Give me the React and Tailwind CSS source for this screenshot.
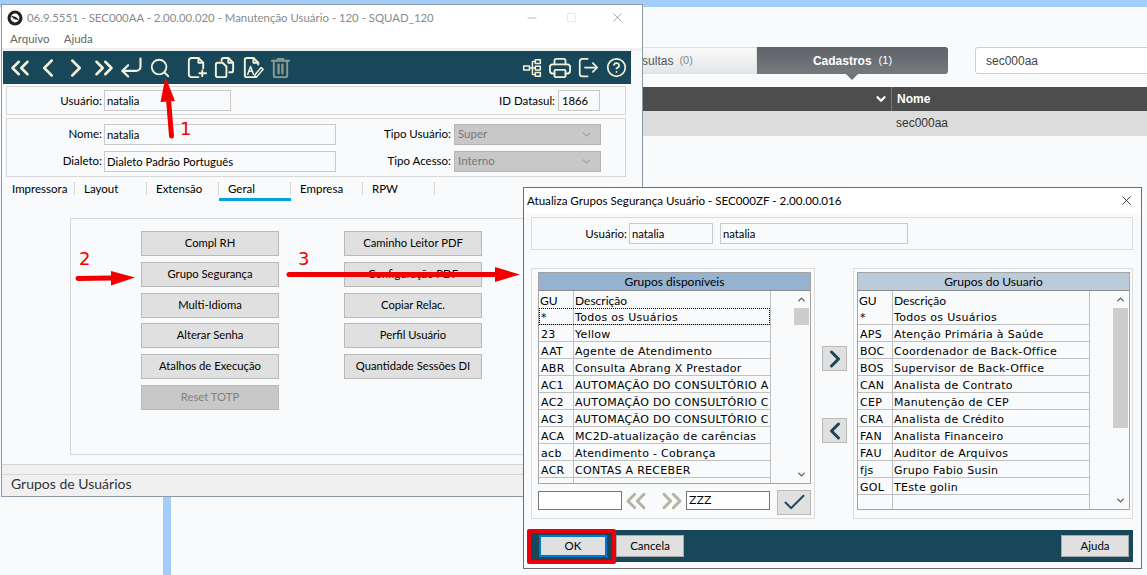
import { Check, ChevronLeft, ChevronRight, ChevronUp, ChevronDown, ChevronsLeft, ChevronsRight, CornerDownLeft, Search, CircleHelp, X, Minus, Square } from "lucide-react";

const leftGroups = [
  ["*", "Todos os Usuários"],
  ["23", "Yellow"],
  ["AAT", "Agente de Atendimento"],
  ["ABR", "Consulta Abrang X Prestador"],
  ["AC1", "AUTOMAÇÃO DO CONSULTÓRIO A"],
  ["AC2", "AUTOMAÇÃO DO CONSULTÓRIO C"],
  ["AC3", "AUTOMAÇÃO DO CONSULTÓRIO C"],
  ["ACA", "MC2D-atualização de carências"],
  ["acb", "Atendimento - Cobrança"],
  ["ACR", "CONTAS A RECEBER"],
  ["", ""],
];

const rightGroups = [
  ["*", "Todos os Usuários"],
  ["APS", "Atenção Primária à Saúde"],
  ["BOC", "Coordenador de Back-Office"],
  ["BOS", "Supervisor de Back-Office"],
  ["CAN", "Analista de Contrato"],
  ["CEP", "Manutenção de CEP"],
  ["CRA", "Analista de Crédito"],
  ["FAN", "Analista Financeiro"],
  ["FAU", "Auditor de Arquivos"],
  ["fjs", "Grupo Fabio Susin"],
  ["GOL", "TEste golin"],
  ["", ""],
];

const ui = "font-['Lato',sans-serif]";
const list = "font-['DejaVu_Sans',sans-serif]";

// toolbar drawings that lucide has no close match for
function Glyph({ children, className = "h-[23px] w-[23px]" }) {
  return (
    <svg viewBox="0 0 24 24" fill="none" stroke="currentColor" strokeWidth="2" strokeLinecap="round" strokeLinejoin="round" className={className}>
      {children}
    </svg>
  );
}

const NewFile = () => (
  <Glyph>
    <path d="M14 22H7a3 3 0 0 1-3-3V5a3 3 0 0 1 3-3h7l5 5v6" />
    <path d="M14 2v5h5" />
    <path d="M18 15v6M15 18h7" />
  </Glyph>
);

const CopyFile = () => (
  <Glyph>
    <path d="M9 5V4a2 2 0 0 1 2-2h5l5 5v8a2 2 0 0 1-2 2h-2" />
    <path d="M16 2v5h5" />
    <path d="M5 7h5l4 4v9a2 2 0 0 1-2 2H5a2 2 0 0 1-2-2V9a2 2 0 0 1 2-2z" />
  </Glyph>
);

const EditFile = () => (
  <Glyph>
    <path d="M18 9V7l-5-5H6a2 2 0 0 0-2 2v16a2 2 0 0 0 2 2h10" />
    <path d="M13 2v5h5" />
    <path d="M7 19l3-8 3 8M8 16h4" strokeWidth="1.6" />
    <path d="M15 19l6-7 2 2-6 7-3 1z" strokeWidth="1.6" />
  </Glyph>
);

const TrashBin = () => (
  <Glyph>
    <path d="M3 5h18" />
    <path d="M9 5V3h6v2" />
    <path d="M5 5v15a2 2 0 0 0 2 2h10a2 2 0 0 0 2-2V5" />
    <path d="M10 9v9M14 9v9" strokeWidth="2.4" />
  </Glyph>
);

const TreeBoxes = () => (
  <Glyph className="h-[20px] w-[20px]">
    <rect x="2" y="9.5" width="7" height="5" strokeWidth="1.8" />
    <rect x="16" y="2" width="6" height="4.5" strokeWidth="1.8" />
    <rect x="16" y="9.75" width="6" height="4.5" strokeWidth="1.8" />
    <rect x="16" y="17.5" width="6" height="4.5" strokeWidth="1.8" />
    <path d="M9 12h7M12.5 4.25v15.5M12.5 4.25H16M12.5 19.75H16" strokeWidth="1.8" />
  </Glyph>
);

const PrinterBox = () => (
  <Glyph className="h-[22px] w-[22px]">
    <path d="M6 8V4a2 2 0 0 1 2-2h8a2 2 0 0 1 2 2v4" />
    <path d="M6 18H4a3 3 0 0 1-3-3v-4a3 3 0 0 1 3-3h16a3 3 0 0 1 3 3v4a3 3 0 0 1-3 3h-2" />
    <rect x="6" y="14" width="12" height="8" rx="1" />
  </Glyph>
);

const ExitBox = () => (
  <Glyph className="h-[21px] w-[21px]">
    <path d="M11 2H5a3 3 0 0 0-3 3v14a3 3 0 0 0 3 3h6" />
    <path d="M8 12h14M17 7l5 5-5 5" />
  </Glyph>
);

function Field({ value, className = "" }) {
  return (
    <div className={`h-[21px] border border-[#c9c9c9] bg-[#f9fafc] pl-[2px] text-[11.25px] leading-[20px] text-black ${className}`}>
      {value}
    </div>
  );
}

function SelectBox({ value }) {
  return (
    <div className="flex h-[21px] w-[147px] items-center justify-between border border-[#b4b4b4] bg-[#c8c8c8] pl-[3px] pr-[7px] text-[11.5px] text-[#777]">
      {value}
      <ChevronDown className="h-[13px] w-[13px] text-[#a0a0a0]" />
    </div>
  );
}

function ActionButton({ label, disabled }) {
  return (
    <div className={`flex h-[25px] w-[138px] items-center justify-center border border-[#b9b9b9] text-[11.25px] ${disabled ? "bg-[#c8c8c8] text-[#808080]" : "bg-[#e0e0e0] text-black"}`}>
      {label}
    </div>
  );
}

function Row({ gu, name, wide, focus }) {
  return (
    <div className={`flex h-[17px] border-b border-[#c0c0c0] ${list} text-[11px] leading-[20px] tracking-[0.3px] text-black ${focus ? "outline-1 outline-dotted outline-black -outline-offset-1" : ""}`}>
      <div className={`${wide} shrink-0 border-r border-[#c0c0c0] pl-[2px]`}>{gu}</div>
      <div className="min-w-0 flex-1 overflow-hidden whitespace-nowrap pl-[1px]">{name}</div>
    </div>
  );
}

function Scrollbar({ thumb }) {
  return (
    <div className="flex h-full w-[15px] flex-col bg-[#f9fafc]">
      <div className="flex h-[17px] items-center justify-center">
        <ChevronUp className="h-[11px] w-[11px] text-[#606060]" strokeWidth={3} />
      </div>
      <div className={`${thumb} bg-[#cdcdcd]`} />
      <div className="flex-1" />
      <div className="flex h-[17px] items-center justify-center">
        <ChevronDown className="h-[11px] w-[11px] text-[#606060]" strokeWidth={3} />
      </div>
    </div>
  );
}

function GroupList({ title, headColor, rows, thumb, height, focusFirst }) {
  return (
    <div className={`ml-[3px] mt-[3px] flex w-[273px] ${height} flex-col border border-[#a3a3a3]`}>
      <div className={`flex h-[18px] shrink-0 items-center justify-center border-b border-[#8c8c8c] ${headColor} ${ui} text-[12px] text-black`}>
        {title}
      </div>
      <div className="flex min-h-0 flex-1">
        <div className="w-[232px] overflow-hidden border-r border-[#c0c0c0]">
          <div className={`flex h-[17px] ${ui} text-[12px] leading-[19px] text-black`}>
            <div className="w-[35px] shrink-0 border-r border-[#c0c0c0] pl-[1px]">GU</div>
            <div className="pl-[1px]">Descrição</div>
          </div>
          {rows.map((r, i) => (
            <Row key={i} gu={r[0]} name={r[1]} wide="w-[35px]" focus={focusFirst && i === 0} />
          ))}
        </div>
        <div className="flex-1" />
        <Scrollbar thumb={thumb} />
        <div className="w-[1px]" />
      </div>
    </div>
  );
}

function MoveButton({ children }) {
  return (
    <div className="flex h-[25px] w-[25px] items-center justify-center border border-[#b9b9b9] bg-[#e0e0e0] text-[#18475a]">
      {children}
    </div>
  );
}

function FooterButton({ label, className = "border border-[#a9a9a9]" }) {
  return (
    <div className={`flex h-[22px] w-[68px] items-center justify-center bg-[#e0e0e0] ${ui} text-[11.5px] text-black ${className}`}>
      {label}
    </div>
  );
}

function Tool({ w, dim, children }) {
  return (
    <div className={`flex ${w} shrink-0 items-center justify-center ${dim ? "text-[#8d9a92]" : "text-[#f5f1d6]"}`}>
      {children}
    </div>
  );
}

function BackgroundApp() {
  return (
    <div className="absolute inset-0 font-['Liberation_Sans',sans-serif]">
      <div className="h-[7px] bg-[#a3ccf9]" />
      <div className="ml-[556px] mt-[40px] flex h-[27px] text-[12px]">
        <div className="flex w-[201px] shrink-0 items-center justify-center gap-[6px] border border-[#e2e2e2] bg-gradient-to-b from-[#f9f9f9] to-[#e3e6e9] text-[#555]">
          Consultas <span className="text-[11px] text-[#888]">(0)</span>
        </div>
        <div className="relative flex w-[191px] shrink-0 items-center justify-center gap-[7px] rounded-r-[3px] bg-gradient-to-b from-[#5f6366] to-[#767a80] text-white">
          <span className="font-semibold">Cadastros</span>
          <span className="text-[11px]">(1)</span>
          <div className="absolute left-[89px] top-[27px] h-0 w-0 border-x-[6px] border-t-[6px] border-x-transparent border-t-[#6f7377]" />
        </div>
        <div className="ml-[27px] flex w-[190px] shrink-0 items-center rounded-[3px] border border-[#cfcfcf] bg-white pl-[10px] text-[#444]">
          sec000aa
        </div>
      </div>
      <div className="ml-[556px] mt-[13px] flex h-[24px] bg-[#4d4d4d] text-[12px] font-bold leading-[24px] text-white">
        <div className="flex w-[336px] shrink-0 items-center justify-end border-r border-[#777] pr-[3px]">
          <ChevronDown className="h-[14px] w-[14px]" strokeWidth={4} />
        </div>
        <div className="pl-[5px]">Nome</div>
      </div>
      <div className="ml-[556px] h-[25px] bg-[#dcdcdc] pl-[340px] text-[12px] leading-[25px] text-[#333]">sec000aa</div>
      <div className="absolute left-[163px] top-[496px] h-[79px] w-[8px] bg-[#a3ccf9]" />
    </div>
  );
}

function MainWindow() {
  return (
    <div className={`absolute left-[1px] top-[4px] h-[493px] w-[642px] overflow-hidden border border-[#8c98a3] bg-[#f8fafc] ${ui}`}>
      <div className="flex h-[25px] items-center bg-white pl-[5px] pr-[17px] text-[11.4px] text-[#8a8a8a]">
        <svg viewBox="0 0 16 16" className="h-[16px] w-[16px]">
          <circle cx="8" cy="8" r="7.5" fill="#222" />
          <circle cx="8" cy="8" r="4.4" fill="#fff" />
          <path d="M3.5 5.5 L9 7 L12.5 10.5 L7 9 Z" fill="#222" />
        </svg>
        <span className="ml-[4px]">06.9.5551 - SEC000AA - 2.00.00.020 - Manutenção Usuário - 120 - SQUAD_120</span>
        <Minus className="ml-auto h-[14px] w-[14px] text-[#8a8a8a]" strokeWidth={1} />
        <Square className="ml-[27px] h-[11px] w-[11px] text-[#dcdcdc]" strokeWidth={1.5} />
        <X className="ml-[33px] h-[15px] w-[15px] text-[#777]" strokeWidth={1} />
      </div>
      <div className="flex h-[18px] items-center gap-[14px] bg-white pl-[8px] text-[11.5px] text-[#666]">
        <span>Arquivo</span>
        <span>Ajuda</span>
      </div>
      <div className="h-[3px] bg-[#f0f0f0]" />
      <div className="ml-[1px] flex h-[33px] w-[628px] overflow-hidden bg-[#18475a] pl-[3px]">
        <Tool w="w-[28px]"><ChevronsLeft className="h-[30px] w-[30px] shrink-0" strokeWidth={2} /></Tool>
        <Tool w="w-[28px]"><ChevronLeft className="h-[30px] w-[30px] shrink-0" strokeWidth={2} /></Tool>
        <Tool w="w-[28px]"><ChevronRight className="h-[30px] w-[30px] shrink-0" strokeWidth={2} /></Tool>
        <Tool w="w-[28px]"><ChevronsRight className="h-[30px] w-[30px] shrink-0" strokeWidth={2} /></Tool>
        <Tool w="w-[27px]"><CornerDownLeft className="h-[27px] w-[27px] shrink-0" strokeWidth={1.9} /></Tool>
        <Tool w="w-[30px]"><Search className="h-[22px] w-[22px]" strokeWidth={2} /></Tool>
        <div className="w-[7px] shrink-0" />
        <Tool w="w-[28px]"><NewFile /></Tool>
        <Tool w="w-[28px]"><CopyFile /></Tool>
        <Tool w="w-[29px]"><EditFile /></Tool>
        <Tool w="w-[27px]" dim><TrashBin /></Tool>
        <div className="w-[224px] shrink-0" />
        <Tool w="w-[28px]"><TreeBoxes /></Tool>
        <Tool w="w-[28px]"><PrinterBox /></Tool>
        <Tool w="w-[29px]"><ExitBox /></Tool>
        <Tool w="w-[27px]"><CircleHelp className="h-[21px] w-[21px]" strokeWidth={2} /></Tool>
      </div>

      <div className="ml-[4px] mt-[2px] flex h-[29px] w-[620px] items-center border border-[#d6d6d6] text-[11.5px] text-black">
        <span className="w-[95px] text-right">Usuário:</span>
        <Field value="natalia" className="ml-[2px] w-[127px]" />
        <span className="ml-auto">ID Datasul:</span>
        <Field value="1866" className="ml-[3px] mr-[25px] w-[42px] pl-[3px]" />
      </div>

      <div className="ml-[4px] mt-[3px] flex h-[59px] w-[620px] flex-col justify-center gap-[6px] border border-[#d6d6d6] text-[11.5px] text-black">
        <div className="flex items-center">
          <span className="w-[95px] text-right">Nome:</span>
          <Field value="natalia" className="ml-[2px] w-[232px]" />
          <span className="w-[115px] text-right">Tipo Usuário:</span>
          <div className="ml-[3px]"><SelectBox value="Super" /></div>
        </div>
        <div className="flex items-center">
          <span className="w-[95px] text-right">Dialeto:</span>
          <Field value="Dialeto Padrão Português" className="ml-[2px] w-[232px]" />
          <span className="w-[115px] text-right">Tipo Acesso:</span>
          <div className="ml-[3px]"><SelectBox value="Interno" /></div>
        </div>
      </div>

      <div className="ml-[1px] mt-[5px] flex h-[19px] text-[11.5px] text-black">
        {["Impressora", "Layout", "Extensão", "Geral", "Empresa", "RPW"].map((t) => (
          <div key={t} className={`h-[19px] w-[72px] ${t === "Geral" ? "border-b-[3px] border-[#00a2e0]" : ""}`}>
            <div className="h-[13px] border-r border-[#d6d6d6] pl-[9px] leading-[13px]">{t}</div>
          </div>
        ))}
      </div>

      <div className="ml-[68px] mt-[17px] flex h-[237px] w-[570px] gap-[65px] border border-[#d6d6d6] pl-[70px] pt-[12px]">
        <div className="flex flex-col gap-[5.8px]">
          <ActionButton label="Compl RH" />
          <ActionButton label="Grupo Segurança" />
          <ActionButton label="Multi-Idioma" />
          <ActionButton label="Alterar Senha" />
          <ActionButton label="Atalhos de Execução" />
          <ActionButton label="Reset TOTP" disabled />
        </div>
        <div className="flex flex-col gap-[5.8px]">
          <ActionButton label="Caminho Leitor PDF" />
          <ActionButton label="Configuração PDF" />
          <ActionButton label="Copiar Relac." />
          <ActionButton label="Perfil Usuário" />
          <ActionButton label="Quantidade Sessões DI" />
        </div>
      </div>

      <div className="mt-[9px] h-[11px] border-y border-[#d6d6d6] bg-[#f0f0f0]" />
      <div className="h-[21px] bg-[#f0f0f0] pl-[9px] text-[14px] leading-[17px] text-[#333]">Grupos de Usuários</div>
    </div>
  );
}

function Dialog() {
  return (
    <div className={`absolute left-[523px] top-[187px] h-[382px] w-[619px] border border-[#6e6e6e] bg-[#f8fafc] ${ui}`}>
      <div className="flex h-[25px] items-center justify-between bg-white pl-[3px] pr-[7px] text-[11.6px] text-black">
        <span>Atualiza Grupos Segurança Usuário - SEC000ZF - 2.00.00.016</span>
        <X className="h-[15px] w-[15px] text-black" strokeWidth={1.2} />
      </div>
      <div className="ml-[7px] mt-[4px] flex h-[33px] w-[602px] items-center border border-[#dcdcdc] text-[11.5px] text-black">
        <span className="w-[95px] text-right">Usuário:</span>
        <Field value="natalia" className="ml-[2px] h-[20px] w-[84px]" />
        <Field value="natalia" className="ml-[7px] h-[20px] w-[188px]" />
      </div>

      <div className="ml-[7px] mt-[18px] flex h-[251px]">
        <div className="w-[284px] shrink-0 border border-[#dcdcdc] pl-[3px]">
          <GroupList title="Grupos disponíveis" headColor="bg-[#95b3d1]" rows={leftGroups} thumb="h-[17px]" height="h-[212px]" focusFirst />
          <div className="ml-[3px] mt-[7px] flex items-start">
            <div className="h-[19px] w-[84px] shrink-0 border border-[#777] bg-white" />
            <ChevronsLeft className="ml-[-2px] mt-[-6px] h-[32px] w-[32px] shrink-0 text-[#b4b4a2]" strokeWidth={2.2} />
            <ChevronsRight className="ml-[4px] mt-[-6px] h-[32px] w-[32px] shrink-0 text-[#b4b4a2]" strokeWidth={2.2} />
            <div className="ml-[-2px] h-[19px] w-[84px] shrink-0 border border-[#777] bg-white pl-[2px] font-['DejaVu_Sans',sans-serif] text-[11px] leading-[18px] text-black">ZZZ</div>
            <div className="ml-[7px] mt-[-1px] flex h-[25px] w-[34px] shrink-0 items-center justify-center border border-[#b9b9b9] bg-[#e0e0e0] text-[#18475a]">
              <Check className="h-[27px] w-[27px]" strokeWidth={1.8} />
            </div>
          </div>
        </div>
        <div className="flex w-[38px] shrink-0 flex-col items-center pl-[1px] pt-[78px]">
          <MoveButton><ChevronRight className="h-[28px] w-[28px] shrink-0" strokeWidth={2.6} /></MoveButton>
          <div className="h-[47px]" />
          <MoveButton><ChevronLeft className="h-[28px] w-[28px] shrink-0" strokeWidth={2.6} /></MoveButton>
        </div>
        <div className="w-[280px] shrink-0 border border-[#dcdcdc]">
          <GroupList title="Grupos do Usuario" headColor="bg-[#bccbda]" rows={rightGroups} thumb="h-[120px]" height="h-[238px]" />
        </div>
      </div>

      <div className="ml-[4px] mt-[11px] flex h-[32px] w-[605px] items-center justify-between bg-[#18475a] px-[4px]">
        <div className="flex items-center">
          <FooterButton label="OK" className="ml-[7px] border-2 border-[#0078d7]" />
          <FooterButton label="Cancela" className="ml-[9px] border border-[#a9a9a9]" />
        </div>
        <FooterButton label="Ajuda" />
      </div>
    </div>
  );
}

function Annotations() {
  return (
    <>
      <svg viewBox="0 0 1147 575" className="pointer-events-none absolute left-0 top-0 h-[575px] w-[1147px]">
        <path d="M171.5 136 L168.5 99" stroke="#f00000" strokeWidth="5" strokeLinecap="round" fill="none" />
        <path d="M165.5 77 L175 101 L160.5 102 Z" fill="#f00000" />
        <path d="M78 278.5 L112 278" stroke="#f00000" strokeWidth="5" strokeLinecap="round" fill="none" />
        <path d="M135 277.5 L111 271 L111 285.5 Z" fill="#f00000" />
        <path d="M289 274.5 L496 274.5" stroke="#f00000" strokeWidth="5" strokeLinecap="round" fill="none" />
        <path d="M520 274.5 L495 267 L495 282 Z" fill="#f00000" />
      </svg>
      <span className="absolute left-[180px] top-[118px] font-['DejaVu_Sans',sans-serif] text-[18px] leading-[22px] text-[#f00000]">1</span>
      <span className="absolute left-[79px] top-[248px] font-['DejaVu_Sans',sans-serif] text-[18px] leading-[22px] text-[#f00000]">2</span>
      <span className="absolute left-[298px] top-[248px] font-['DejaVu_Sans',sans-serif] text-[18px] leading-[22px] text-[#f00000]">3</span>
      <div className="absolute left-[527px] top-[529px] h-[35px] w-[89px] rounded-[2px] border-[4px] border-[#e8000f]" />
    </>
  );
}

export default function App() {
  return (
    <div className="relative h-[575px] w-[1147px] overflow-hidden bg-[#f9fafc]">
      <BackgroundApp />
      <MainWindow />
      <Dialog />
      <Annotations />
    </div>
  );
}
